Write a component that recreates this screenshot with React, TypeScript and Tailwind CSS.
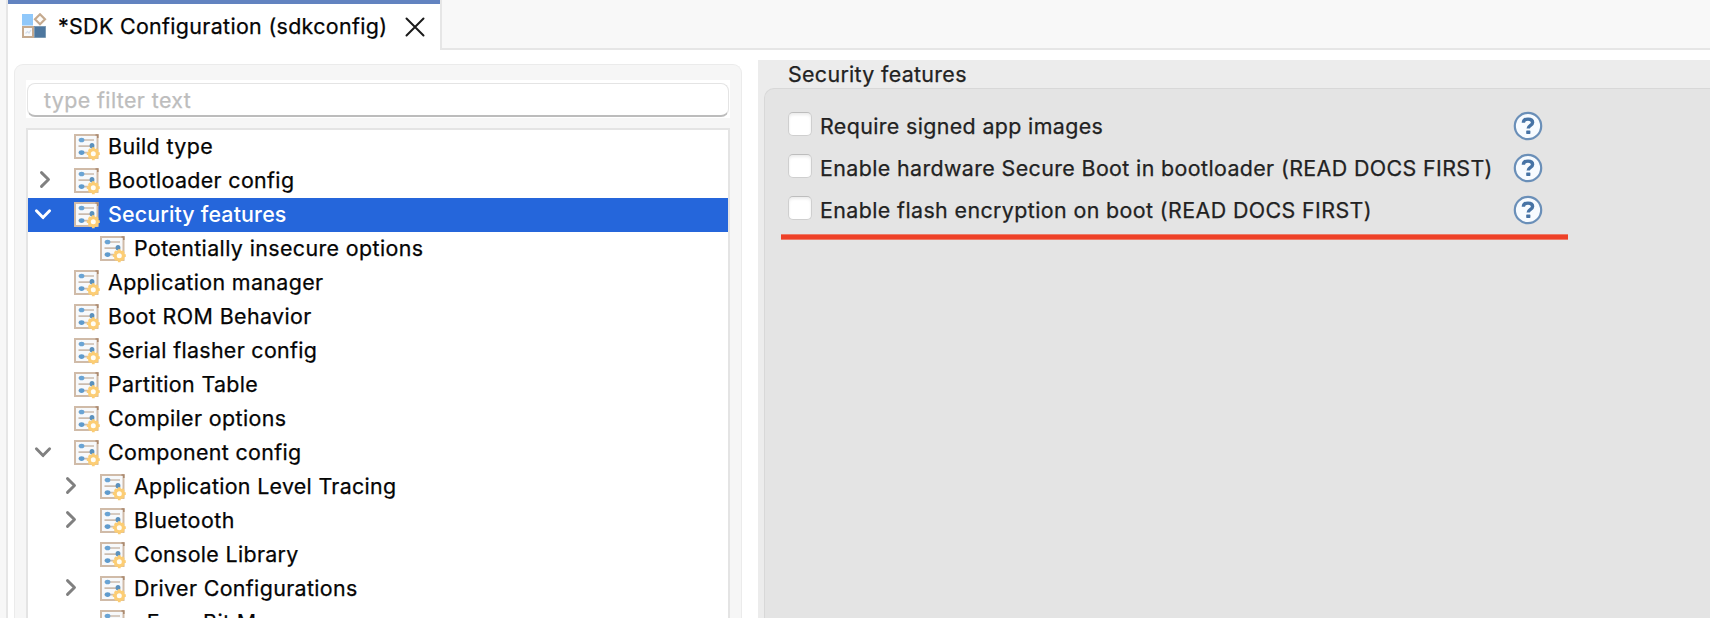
import React from "react";

type Node = {
  label: string;
  level: 0 | 1;
  state?: "open" | "closed";
  selected?: boolean;
  tracking: string;
};

const nodes: Node[] = [
  { label: "Build type", level: 0, tracking: "tracking-[0.4px]" },
  { label: "Bootloader config", level: 0, state: "closed", tracking: "tracking-[0.35px]" },
  { label: "Security features", level: 0, state: "open", selected: true, tracking: "tracking-[0.16px]" },
  { label: "Potentially insecure options", level: 1, tracking: "tracking-[0.39px]" },
  { label: "Application manager", level: 0, tracking: "tracking-[0.37px]" },
  { label: "Boot ROM Behavior", level: 0, tracking: "tracking-[0.39px]" },
  { label: "Serial flasher config", level: 0, tracking: "tracking-[0.32px]" },
  { label: "Partition Table", level: 0, tracking: "tracking-[0.35px]" },
  { label: "Compiler options", level: 0, tracking: "tracking-[0.4px]" },
  { label: "Component config", level: 0, state: "open", tracking: "tracking-[0.36px]" },
  { label: "Application Level Tracing", level: 1, state: "closed", tracking: "tracking-[0.31px]" },
  { label: "Bluetooth", level: 1, state: "closed", tracking: "tracking-[0.5px]" },
  { label: "Console Library", level: 1, tracking: "tracking-[0.33px]" },
  { label: "Driver Configurations", level: 1, state: "closed", tracking: "tracking-[0.36px]" },
  { label: "eFuse Bit Manager", level: 1, tracking: "tracking-[0.38px]" },
];

const options = [
  { label: "Require signed app images", tracking: "tracking-[0.37px]" },
  { label: "Enable hardware Secure Boot in bootloader (READ DOCS FIRST)", tracking: "tracking-[0.385px]" },
  { label: "Enable flash encryption on boot (READ DOCS FIRST)", tracking: "tracking-[0.4px]" },
];

function ConfigIcon() {
  return (
    <svg className="h-[27px] w-[27px] shrink-0" viewBox="0 0 27 27" fill="none">
      <rect x="1" y="1" width="22.5" height="23" fill="#f7f9fb" stroke="#d0bba8" strokeWidth="2" />
      <path d="M21.5 1h2.3v3" stroke="#ab8a70" strokeWidth="1.6" />
      <path d="M4.5 6H20M4.5 12.2H20M4.5 18.6H14" stroke="#cbbcae" strokeWidth="1.7" />
      <ellipse cx="7.6" cy="6" rx="2.8" ry="2.3" fill="#6aa4d4" />
      <ellipse cx="18" cy="11.8" rx="2.4" ry="2.7" fill="#5b91bd" />
      <ellipse cx="7.6" cy="18.6" rx="2.8" ry="2.3" fill="#5f9bcd" />
      <path
        d="M19.3 13.2v13M12.8 19.7h13M14.9 15.3l8.8 8.8M23.7 15.3l-8.8 8.8"
        stroke="#fccd74"
        strokeWidth="2.8"
      />
      <circle cx="19.3" cy="19.7" r="4" fill="#fffdf5" stroke="#fccd74" strokeWidth="3" />
    </svg>
  );
}

function TabIcon() {
  return (
    <svg className="h-[26px] w-[26px] shrink-0" viewBox="0 0 26 26" fill="none">
      <rect x="1" y="1" width="11" height="11.5" fill="#90c8fa" />
      <path d="M19 1.3 24 6.3 19 11.3 14 6.3Z" fill="#fdfcfa" stroke="#c5aa8f" strokeWidth="2.2" />
      <rect x="2" y="14" width="10" height="10" fill="#fafbfc" stroke="#c5aa8f" strokeWidth="2" />
      <path d="M4.5 20.5l2-2 1.5 1.5 2-3" stroke="#d5dfec" strokeWidth="1.2" />
      <rect x="13.5" y="13.5" width="11" height="11" fill="#4d779f" stroke="#7292ad" strokeWidth="0.8" />
    </svg>
  );
}

function HelpIcon() {
  return (
    <svg className="h-[30px] w-[30px] shrink-0" viewBox="0 0 30 30" fill="none">
      <circle cx="15" cy="15" r="13.2" fill="#f7fbff" stroke="#6a8fb8" strokeWidth="2.2" />
      <path
        d="M10.4 11.8c0-2.5 1.8-3.7 4.6-3.7s4.6 1.2 4.6 3.3c0 2.9-4.4 2.9-4.4 6.1"
        stroke="#4673a5"
        strokeWidth="3.4"
      />
      <rect x="13.2" y="19.5" width="4.2" height="3.4" rx="0.6" fill="#4673a5" />
    </svg>
  );
}

function Chevron({ state, selected }: { state?: "open" | "closed"; selected?: boolean }) {
  return (
    <svg className="h-[34px] w-[20px] shrink-0" viewBox="0 0 20 34" fill="none">
      {state && (
        <path
          d={state === "open" ? "M3.4 12.8 10 19.6l6.6-6.8" : "M8.5 8.6l7 6.9-7 6.9"}
          stroke={selected ? "#ffffff" : "#808080"}
          strokeWidth="2.9"
          strokeLinecap="round"
          strokeLinejoin="round"
        />
      )}
    </svg>
  );
}

function TreeRow({ node }: { node: Node }) {
  const pad = node.level === 1 ? "pl-[31px]" : "pl-[5px]";
  const color = node.selected
    ? "bg-[#2566db] font-medium text-white [-webkit-text-stroke:0px]"
    : "text-[#050505]";
  return (
    <div className={`flex h-[34px] shrink-0 items-center ${pad} ${color}`}>
      <Chevron state={node.state} selected={node.selected} />
      <div className="ml-[21px]">
        <ConfigIcon />
      </div>
      <span className={`ml-[7px] whitespace-nowrap pb-[2px] leading-[32px] ${node.tracking}`}>{node.label}</span>
    </div>
  );
}

export default function App() {
  return (
    <div className="flex h-[618px] w-[1710px] overflow-hidden bg-white font-['Inter',sans-serif] text-[21.4px] [-webkit-text-stroke:0.25px]">
      <div className="w-[8px] shrink-0 border-r-2 border-[#e6e6e6] bg-[#f7f7f7]" />
      <div className="flex min-w-0 flex-1 flex-col">
        <header className="flex h-[50px] shrink-0">
          <div className="flex w-[432px] shrink-0 items-center border-t-4 border-[#6283c0] pl-[13px]">
            <div className="-mt-[2px]">
              <TabIcon />
            </div>
            <span className="ml-[11px] whitespace-nowrap pb-[2px] tracking-[0.34px] text-[#050505]">
              *SDK Configuration (sdkconfig)
            </span>
            <svg className="ml-auto mr-[15px] h-[20px] w-[20px] shrink-0" viewBox="0 0 20 20" fill="none">
              <path d="M1.5 1.5l17 17M18.5 1.5l-17 17" stroke="#1a1a1a" strokeWidth="2" strokeLinecap="round" />
            </svg>
          </div>
          <div className="flex-1 border-b-2 border-l-2 border-[#e6e6e6] bg-[#f8f8f8]" />
        </header>

        <main className="flex min-h-0 flex-1">
          <section className="ml-[6px] mt-[14px] flex w-[728px] shrink-0 flex-col rounded-t-[9px] border border-b-0 border-[#ebebeb] bg-[#f6f6f6] px-[11px] pt-[15px]">
            <div className="h-[38px] shrink-0 bg-white px-px pt-[3px]">
              <div className="flex h-[34px] items-center rounded-[8px] border border-b-2 border-[#e4e4e4] border-b-[#bcbcbc] bg-white pl-[16px] pt-[2px] tracking-[0.4px] text-[#bdbdbd]">
                type filter text
              </div>
            </div>
            <div className="mt-[10px] flex min-h-0 flex-1 flex-col overflow-hidden border-2 border-b-0 border-[#e4e4e4] bg-white">
              {nodes.map((n) => (
                <TreeRow key={n.label} node={n} />
              ))}
            </div>
          </section>

          <section className="ml-[16px] mt-[10px] flex min-w-0 flex-1 flex-col bg-[#ececec] pl-[6px] text-[#222222]">
            <h2 className="h-[28px] shrink-0 pl-[24px] leading-[28px] tracking-[0.33px]">Security features</h2>
            <div className="flex-1 rounded-tl-[10px] border-l border-t border-[#d8d8d8] bg-[#e4e4e4] pt-[16px]">
              {options.map((o) => (
                <div key={o.label} className="flex h-[42px] items-center pl-[23px]">
                  <div className="-mt-[4px] h-[24px] w-[24px] shrink-0 rounded-[5px] border border-[#cfcfcf] border-t-[#bdbdbd] bg-white shadow-[inset_0_2px_3px_#ececec]" />
                  <span className={`ml-[8px] w-[693px] shrink-0 whitespace-nowrap ${o.tracking}`}>{o.label}</span>
                  <HelpIcon />
                </div>
              ))}
              <div className="ml-[16px] mt-[3px] h-[6px] w-[787px] border-y border-[#ee7a68] bg-[#ee4128]" />
            </div>
          </section>
        </main>
      </div>
    </div>
  );
}
